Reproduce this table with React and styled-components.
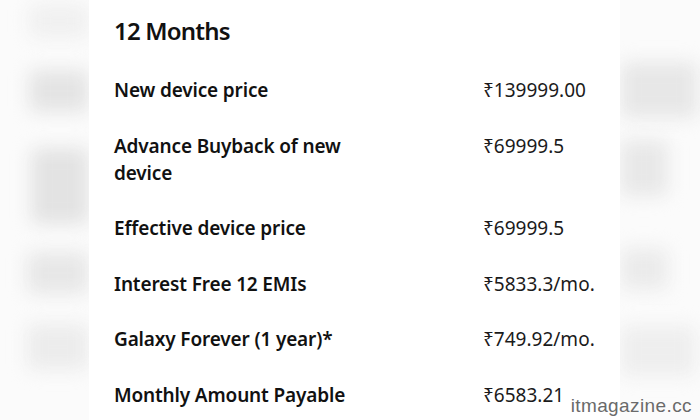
import React from 'react';
import styled, { createGlobalStyle } from 'styled-components';

const GlobalStyle = createGlobalStyle`
  html, body {
    margin: 0;
    padding: 0;
    background: #fbfbfb;
  }
  body {
    font-family: "Noto Sans", "Open Sans", sans-serif;
  }
`;

const Page = styled.div`
  position: relative;
  display: flex;
  width: 700px;
  height: 420px;
  overflow: hidden;
  background: #fbfbfb;
`;

const Side = styled.div`
  display: flex;
  flex-direction: column;
  align-items: ${(p) => (p.$right ? 'flex-start' : 'flex-end')};
  width: ${(p) => p.$width}px;
  flex-shrink: 0;
  overflow: hidden;
`;

const Blob = styled.div`
  width: ${(p) => p.$w}px;
  height: ${(p) => p.$h}px;
  margin-top: ${(p) => p.$gap}px;
  background: ${(p) => p.$tone};
  filter: blur(9px);
  border-radius: 6px;
  flex-shrink: 0;
`;

const Card = styled.div`
  flex: 1;
  background: #ffffff;
  padding: 14px 25px 0 25px;
  color: #111111;
`;

const Title = styled.h2`
  margin: 0 0 29px 0;
  font-size: 24px;
  line-height: 34px;
  font-weight: 600;
  letter-spacing: -0.8px;
`;

const Table = styled.div`
  display: grid;
  grid-template-columns: 262px 1fr;
  column-gap: 107px;
  row-gap: 28.6px;
`;

const Label = styled.div`
  font-size: 19px;
  line-height: 27px;
  font-weight: 600;
  letter-spacing: -0.15px;
`;

const Value = styled.div`
  font-size: 19px;
  line-height: 27px;
  font-weight: 400;
  color: #1b1b1b;
`;

const Watermark = styled.div`
  position: absolute;
  right: 8px;
  bottom: 3px;
  font-family: "Liberation Sans", Arial, sans-serif;
  font-size: 19px;
  font-weight: 300;
  color: #6a6a6a;
  text-shadow: 0 0 2px #fff, 0 0 2px #fff;
  letter-spacing: 0.4px;
`;

const rows = [
  ['New device price', '₹139999.00'],
  ['Advance Buyback of new device', '₹69999.5'],
  ['Effective device price', '₹69999.5'],
  ['Interest Free 12 EMIs', '₹5833.3/mo.'],
  ['Galaxy Forever (1 year)*', '₹749.92/mo.'],
  ['Monthly Amount Payable', '₹6583.21'],
];

const leftBlobs = [
  { w: 60, h: 34, gap: 4, tone: '#f0f0f0' },
  { w: 60, h: 42, gap: 32, tone: '#e4e4e4' },
  { w: 58, h: 76, gap: 36, tone: '#e3e3e3' },
  { w: 62, h: 42, gap: 28, tone: '#e7e7e7' },
  { w: 62, h: 46, gap: 30, tone: '#ececec' },
];

const rightBlobs = [
  { w: 78, h: 56, gap: 62, tone: '#e7e7e7' },
  { w: 48, h: 56, gap: 22, tone: '#e8e8e8' },
  { w: 48, h: 42, gap: 52, tone: '#ebebeb' },
  { w: 76, h: 50, gap: 36, tone: '#eeeeee' },
];

export default function App() {
  return (
    <Page>
      <GlobalStyle />
      <Side $width={89}>
        {leftBlobs.map((b, i) => (
          <Blob key={i} $w={b.w} $h={b.h} $gap={b.gap} $tone={b.tone} />
        ))}
      </Side>
      <Card>
        <Title>12 Months</Title>
        <Table>
          {rows.map(([label, value]) => (
            <React.Fragment key={label}>
              <Label>{label}</Label>
              <Value>{value}</Value>
            </React.Fragment>
          ))}
        </Table>
      </Card>
      <Side $width={90} $right>
        {rightBlobs.map((b, i) => (
          <Blob key={i} $w={b.w} $h={b.h} $gap={b.gap} $tone={b.tone} />
        ))}
      </Side>
      <Watermark>itmagazine.cc</Watermark>
    </Page>
  );
}
